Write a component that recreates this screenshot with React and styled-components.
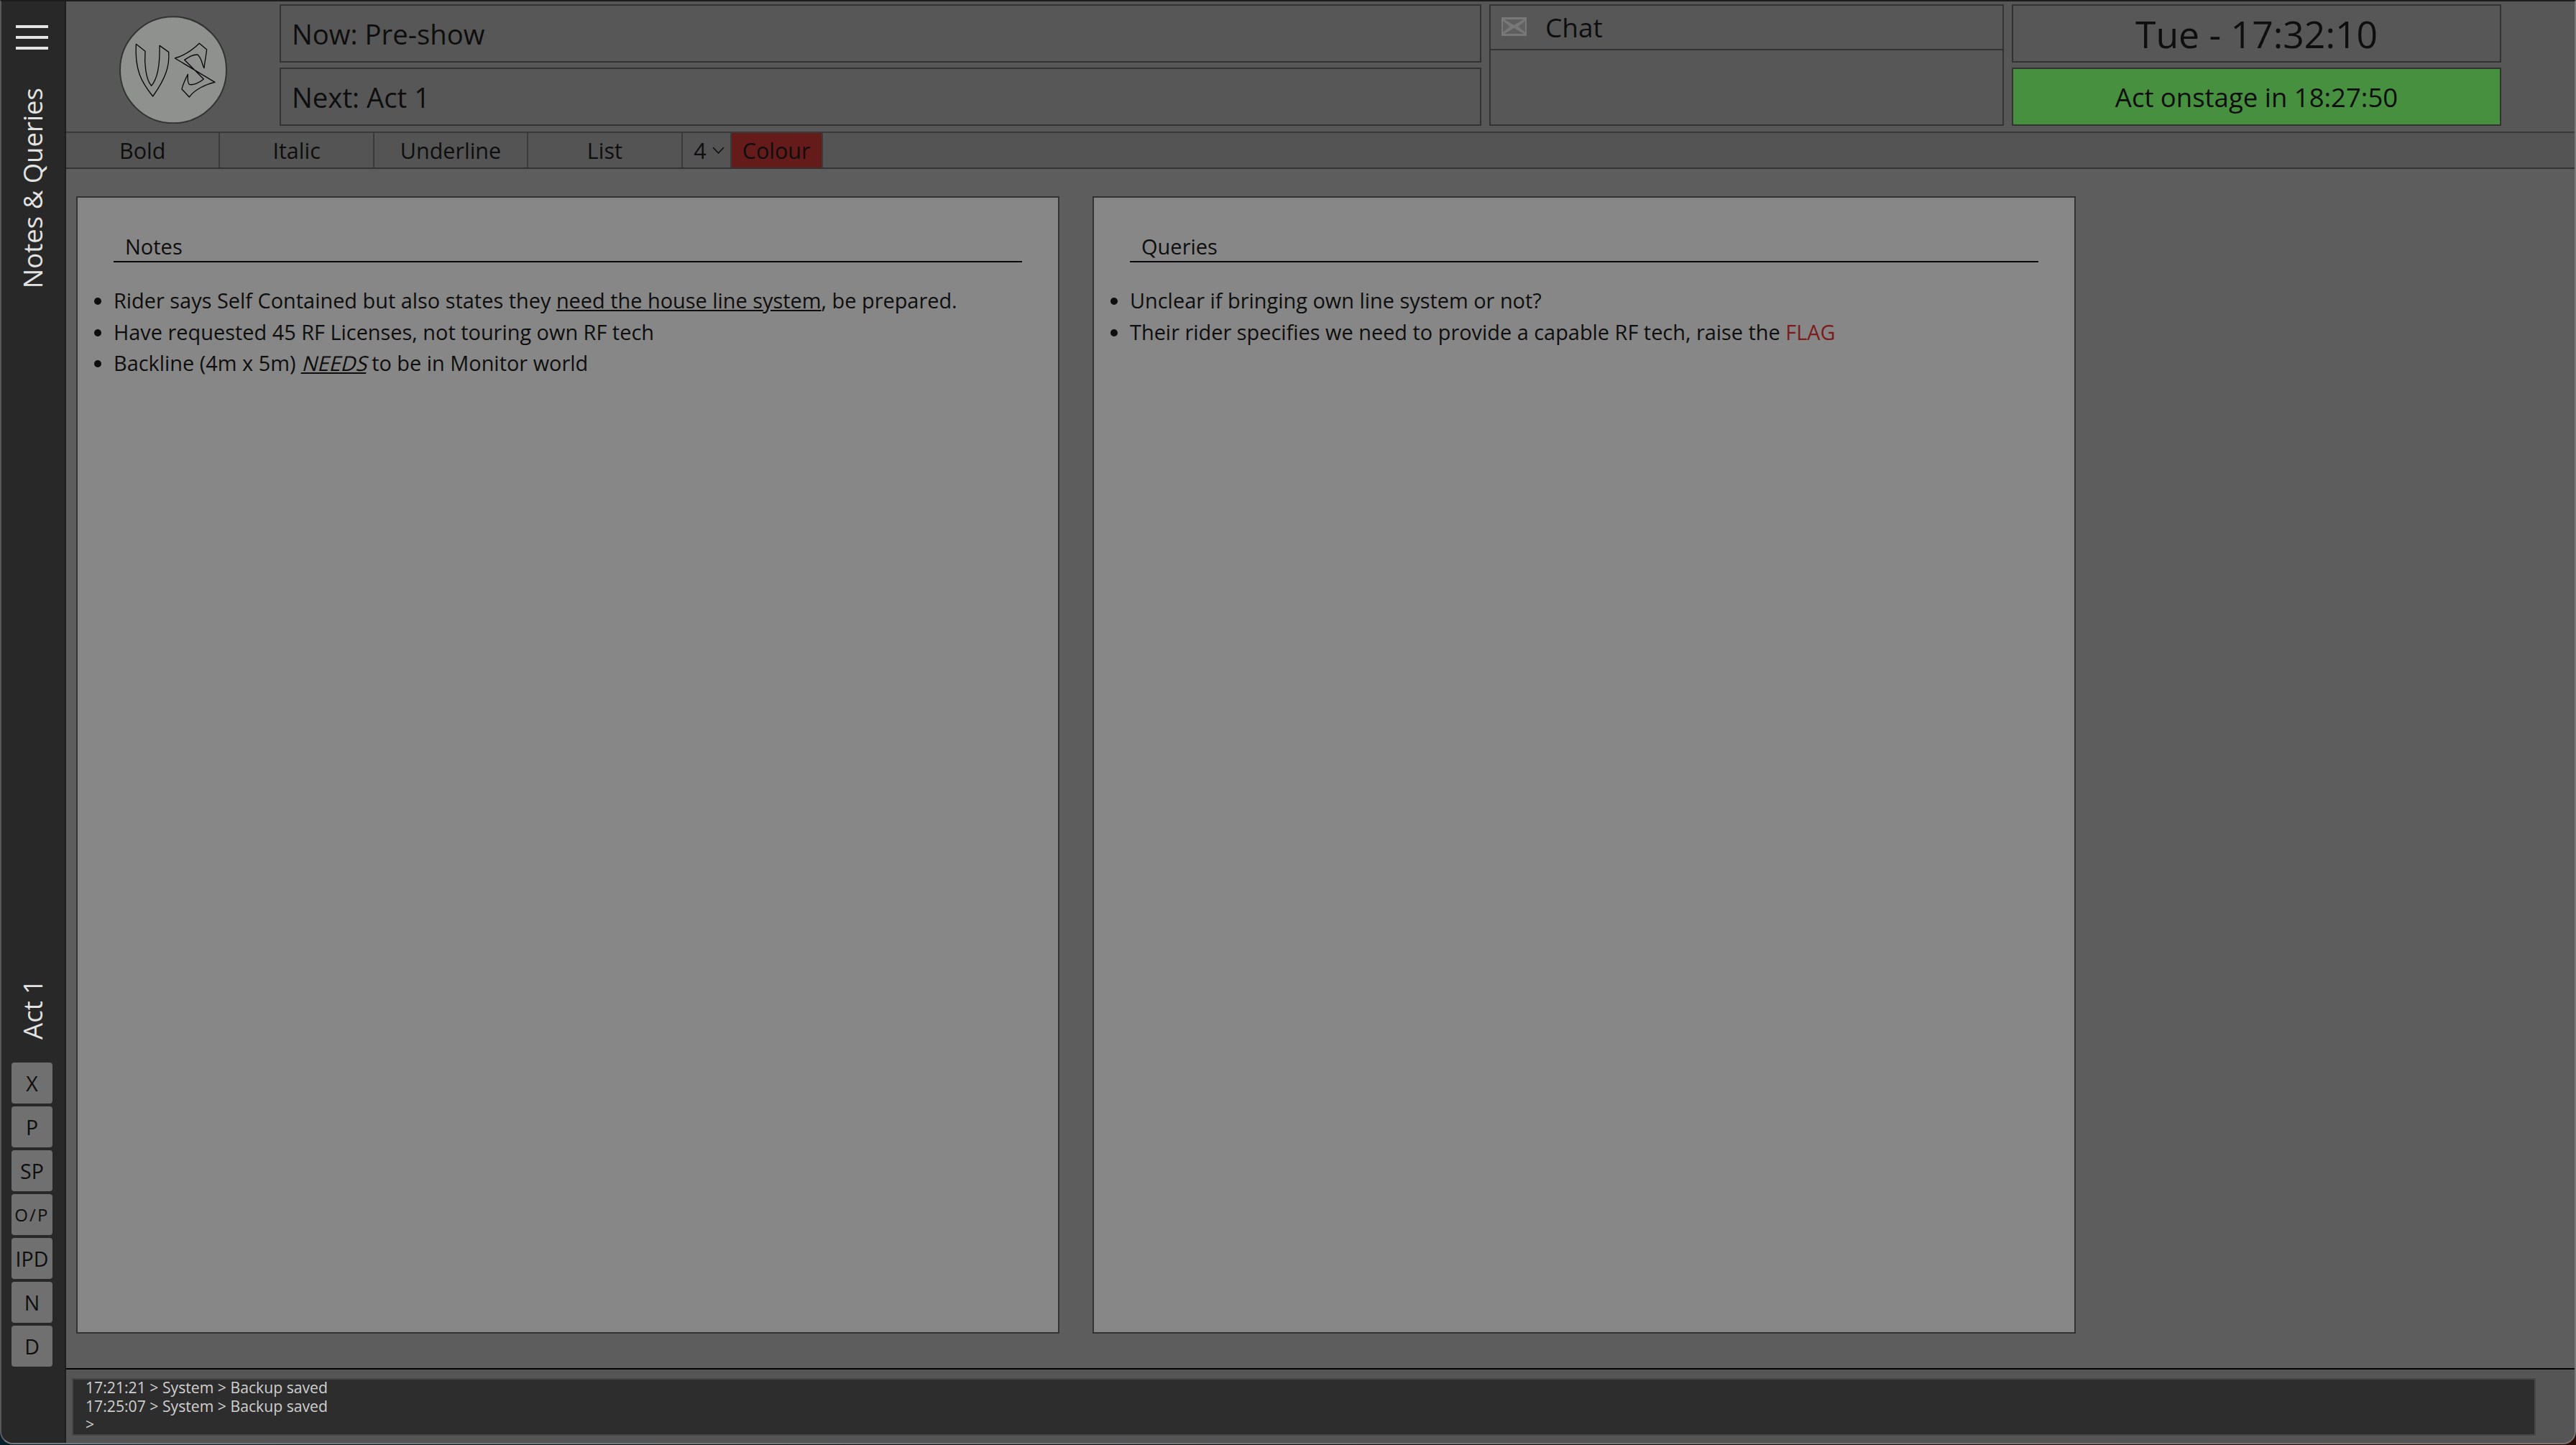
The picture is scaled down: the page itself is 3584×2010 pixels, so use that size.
import React from "react";
import styled, { createGlobalStyle } from "styled-components";

const Global = createGlobalStyle`
  html, body { margin: 0; padding: 0; background: #050505; }
  body { font-family: "Open Sans", "Noto Sans", sans-serif; color: #0e0e0e; overflow: hidden; }
  * { box-sizing: border-box; }
`;

const Desktop = styled.div`
  width: 3584px;
  height: 2010px;
  background: linear-gradient(90deg, #06202a 0%, #0a0a0a 50%, #2a0d06 100%);
`;
const Window = styled.div`
  width: 3584px;
  height: 2009px;
  display: flex;
  background: #5d5d5d;
  border-top: 2px solid #1c1c1c;
  border-left: 2px solid #5a5a5a;
  border-right: 2px solid #7a7a7a;
  border-bottom: 2px solid #787878;
  border-radius: 0 0 18px 18px;
  overflow: hidden;
`;
const Sidebar = styled.aside`
  width: 90px;
  flex: none;
  background: #282828;
  border-right: 2px solid #1e1e1e;
  padding-right: 3px;
  display: flex;
  flex-direction: column;
  align-items: center;
`;
const Burger = styled.button`
  width: 45px;
  height: 34px;
  margin: 33px 0 0;
  padding: 0;
  border: 0;
  background: none;
  display: flex;
  flex-direction: column;
  justify-content: space-between;
`;
const BurgerBar = styled.span`
  display: block;
  height: 4px;
  background: #e4e4e4;
`;
const VerticalLabel = styled.div`
  writing-mode: vertical-rl;
  transform: rotate(180deg);
  color: #e2e2e2;
  font-size: 36.5px;
  line-height: 40px;
  white-space: nowrap;
`;
const SideTop = styled.div`
  margin-top: 53px;
`;
const SideBottom = styled.div`
  margin-top: auto;
  display: flex;
  flex-direction: column;
  align-items: center;
  padding-bottom: 106px;
`;
const SideButtons = styled.div`
  margin-top: 32px;
  display: flex;
  flex-direction: column;
  gap: 4px;
`;
const SideButton = styled.div`
  width: 57px;
  height: 57px;
  background: #707070;
  border-radius: 4px;
  display: flex;
  align-items: center;
  justify-content: center;
  font-size: ${p => (p.$small ? "24px" : "28.5px")};
  letter-spacing: ${p => (p.$small ? "2.2px" : "0")};
`;
const Main = styled.div`
  flex: 1;
  min-width: 0;
  display: flex;
  flex-direction: column;
`;
const Header = styled.header`
  height: 181px;
  flex: none;
  background: #575757;
  padding: 4px 0 0;
  display: grid;
  grid-template-columns: 286px 1672px 716px 681px;
  column-gap: 11px;
`;
const LogoCell = styled.div`
  height: 173px;
  padding: 16px 0 0 74px;
  line-height: 0;
`;
const Stack = styled.div`
  display: flex;
  flex-direction: column;
  gap: 7px;
`;
const InfoBox = styled.div`
  height: 81px;
  border: 2px solid #333;
  display: flex;
  align-items: center;
  padding: 0 15px;
  font-size: 38.3px;
`;
const ClockBox = styled(InfoBox)`
  justify-content: center;
  font-size: 51.7px;
`;
const CountdownBox = styled(InfoBox)`
  justify-content: center;
  font-size: 36.5px;
  background: #47903f;
`;
const ChatBox = styled.div`
  height: 169px;
  border: 2px solid #333;
  display: flex;
  flex-direction: column;
`;
const ChatHead = styled.div`
  height: 62px;
  border-bottom: 2px solid #333;
  display: flex;
  align-items: center;
  padding: 0 0 2px 15px;
  gap: 26px;
  font-size: 37px;
`;
const Toolbar = styled.nav`
  height: 52px;
  flex: none;
  background: #545454;
  border-top: 2px solid #3a3a3a;
  border-bottom: 2px solid #333;
  display: flex;
`;
const ToolButton = styled.div`
  width: ${p => p.$w}px;
  flex: none;
  border-right: 2px solid #3a3a3a;
  display: flex;
  align-items: center;
  justify-content: center;
  font-size: 30.5px;
  background: ${p => p.$bg || "transparent"};
`;
const SizeSelect = styled(ToolButton)`
  gap: 8px;
  padding-left: 8px;
`;
const Content = styled.main`
  flex: 1;
  min-height: 0;
  padding: 38px 0 48px 14px;
  display: flex;
  gap: 46px;
`;
const Panel = styled.section`
  width: 1368px;
  background: #878787;
  border: 2px solid #333;
  padding: 50px 50px 0;
`;
const PanelTitle = styled.h2`
  margin: 0;
  height: 40px;
  border-bottom: 2px solid #0a0a0a;
  padding-left: 16px;
  font-size: 29px;
  font-weight: 400;
  line-height: 36px;
`;
const List = styled.ul`
  margin: 31px 0 0;
  padding: 0;
  font-size: 28.9px;
  line-height: 43.5px;
  list-style: disc outside;
`;
const Flag = styled.span`
  color: #7c1b1b;
`;
const Footer = styled.footer`
  height: 104px;
  flex: none;
  background: #555;
  border-top: 2px solid #050505;
  padding: 12px 54px 12px 8px;
`;
const Log = styled.div`
  height: 80px;
  background: #2d2d2d;
  border: 2px solid #474747;
  padding: 0 17px;
  color: #cfcfcf;
  font-size: 21.2px;
  line-height: 25.5px;
`;
const LogLines = styled.div`
  margin-top: -2px;
`;
const Underlined = styled.u``;
const Needs = styled.span`
  display: inline-block;
  line-height: 1;
  text-decoration: underline;
  transform: skewX(-14deg);
  margin: 0 -3px 0 3px;
`;

const Logo = () => (
  <svg width="150" height="150" viewBox="198 34 450 450">
    <circle cx="423" cy="260" r="222" fill="#8f918f" stroke="#333" strokeWidth="6" />
    <path d="M268 152 L306 182 C302 230 308 300 332 326 C355 300 368 240 366 158 L404 185 C408 240 395 290 338 370 C290 310 262 260 268 152 Z" fill="none" stroke="#080808" strokeWidth="4" strokeLinejoin="round" />
    <path d="M430 211 C470 200 505 175 532 149 L563 175 C560 200 555 225 552 252 C545 245 545 215 525 196 C505 195 490 205 470 218 L550 298 C530 315 505 325 490 320 C480 310 485 290 484 278 C475 295 465 315 459 340 L490 373 C510 345 555 320 597 311 Z" fill="none" stroke="#080808" strokeWidth="4" strokeLinejoin="round" />
  </svg>
);

const Envelope = () => (
  <svg width="35" height="26" viewBox="0 0 35 26">
    <rect width="35" height="26" fill="#787878" />
    <path d="M4 3 H31 L17.5 11 Z M4 23 H31 L17.5 15 Z" fill="#5e5e5e" />
    <path d="M2 5 L12 13 L2 21 Z M33 5 L23 13 L33 21 Z" fill="#626262" />
  </svg>
);

const Chevron = () => (
  <svg width="17" height="10" viewBox="0 0 17 10">
    <path d="M1 1 L8.5 9 L16 1" fill="none" stroke="#0e0e0e" strokeWidth="1.6" />
  </svg>
);

const sideButtons = ["X", "P", "SP", "O/P", "IPD", "N", "D"];
const tools = ["Bold", "Italic", "Underline", "List"];

export default function App() {
  return (
    <Desktop>
      <Global />
      <Window>
        <Sidebar>
          <Burger aria-label="Menu">
            <BurgerBar />
            <BurgerBar />
            <BurgerBar />
          </Burger>
          <SideTop>
            <VerticalLabel>Notes &amp; Queries</VerticalLabel>
          </SideTop>
          <SideBottom>
            <VerticalLabel>Act 1</VerticalLabel>
            <SideButtons>
              {sideButtons.map(b => (
                <SideButton key={b} $small={b === "O/P"}>{b}</SideButton>
              ))}
            </SideButtons>
          </SideBottom>
        </Sidebar>
        <Main>
          <Header>
            <LogoCell><Logo /></LogoCell>
            <Stack>
              <InfoBox>Now: Pre-show</InfoBox>
              <InfoBox>Next: Act 1</InfoBox>
            </Stack>
            <ChatBox>
              <ChatHead><Envelope />Chat</ChatHead>
            </ChatBox>
            <Stack>
              <ClockBox>Tue - 17:32:10</ClockBox>
              <CountdownBox>Act onstage in 18:27:50</CountdownBox>
            </Stack>
          </Header>
          <Toolbar>
            {tools.map(t => <ToolButton key={t} $w={214.4}>{t}</ToolButton>)}
            <SizeSelect $w={68}>4<Chevron /></SizeSelect>
            <ToolButton $w={127} $bg="#651b1a">Colour</ToolButton>
          </Toolbar>
          <Content>
            <Panel>
              <PanelTitle>Notes</PanelTitle>
              <List>
                <li>Rider says Self Contained but also states they <Underlined>need the house line system</Underlined>, be prepared.</li>
                <li>Have requested 45 RF Licenses, not touring own RF tech</li>
                <li>Backline (4m x 5m) <Needs>NEEDS</Needs> to be in Monitor world</li>
              </List>
            </Panel>
            <Panel>
              <PanelTitle>Queries</PanelTitle>
              <List>
                <li>Unclear if bringing own line system or not?</li>
                <li>Their rider specifies we need to provide a capable RF tech, raise the <Flag>FLAG</Flag></li>
              </List>
            </Panel>
          </Content>
          <Footer>
            <Log>
              <LogLines>
                <div>17:21:21 &gt; System &gt; Backup saved</div>
                <div>17:25:07 &gt; System &gt; Backup saved</div>
                <div>&gt;</div>
              </LogLines>
            </Log>
          </Footer>
        </Main>
      </Window>
    </Desktop>
  );
}
